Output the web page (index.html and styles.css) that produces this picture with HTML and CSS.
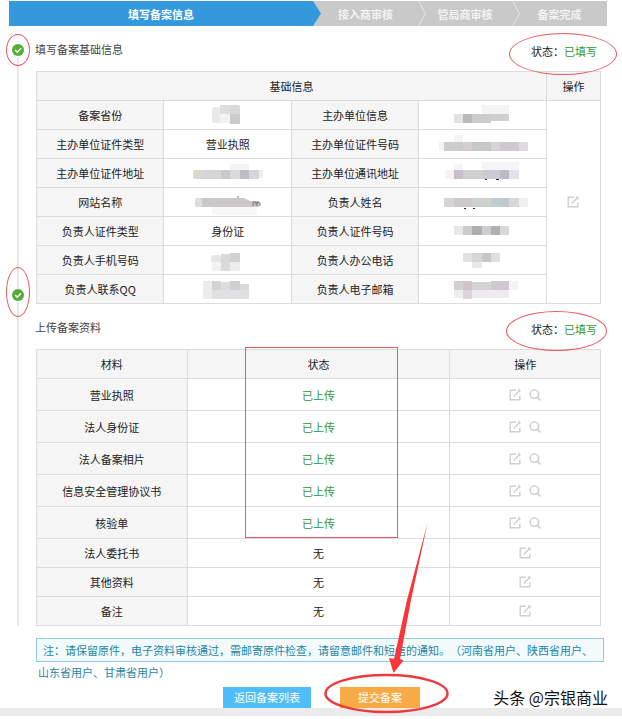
FILE: index.html
```html
<!DOCTYPE html>
<html lang="zh-CN">
<head>
    <meta charset="UTF-8">
    <meta name="viewport" content="width=device-width, initial-scale=1.0">
    <title>填写备案信息</title>
    <link rel="stylesheet" href="styles.css">
</head>
<body>
    <!-- Shared icons -->
    <svg class="icon-defs" width="0" height="0" aria-hidden="true">
        <symbol id="icon-edit" viewBox="0 0 12 12">
            <path d="M7 1.2H1.2v9.6h9.6V6.5M4.8 7.4l5.6-5.8M9 1.2h1.8v2" fill="none" stroke="currentColor" stroke-width="1.4"/>
        </symbol>
        <symbol id="icon-search" viewBox="0 0 12 12">
            <circle cx="5.4" cy="5.2" r="4.2" fill="none" stroke="currentColor" stroke-width="1.6"/>
            <path d="M8.4 8.4l3 3" stroke="currentColor" stroke-width="1.8"/>
        </symbol>
        <symbol id="icon-check" viewBox="0 0 12 12">
            <circle cx="6" cy="6" r="6" fill="#55ad35"/>
            <path d="M3.1 6l2.2 2.2 3.8-3.9" fill="none" stroke="#fff" stroke-width="1.6"/>
        </symbol>
        <symbol id="icon-chevron" viewBox="0 0 8 25">
            <path d="M.5 0l7 12.5-7 12.5" fill="none" stroke="#e6e6e6"/>
        </symbol>
    </svg>

    <ol class="steps">
        <li class="step active">填写备案信息</li>
        <li class="step"><span>接入商审核</span><svg class="chevron"><use href="#icon-chevron"/></svg></li>
        <li class="step"><span>管局商审核</span><svg class="chevron"><use href="#icon-chevron"/></svg></li>
        <li class="step"><span>备案完成</span></li>
    </ol>

    <main class="timeline">
        <section class="basic">
            <div class="marker marker-first"><svg><use href="#icon-check"/></svg></div>
            <div class="section-head">
                <h2>填写备案基础信息</h2>
                <p class="status status-wide">状态：<span class="done">已填写</span></p>
            </div>
            <table class="info">
                <colgroup>
                    <col class="w-info"><col class="w-info"><col class="w-info"><col class="w-info"><col class="w-action">
                </colgroup>
                <thead>
                    <tr><th colspan="4">基础信息</th><th>操作</th></tr>
                </thead>
                <tbody>
                    <tr>
                        <th>备案省份</th>
                        <td><svg class="mosaic" viewBox="0 0 96 28">
                            <rect x="32" y="6" width="9" height="16" rx="3" fill="#e9e9e9"/><rect x="40" y="4" width="11" height="9" fill="#dedede"/><rect x="40" y="13" width="10" height="9" fill="#f2f2f2"/><rect x="50" y="4" width="10" height="10" rx="2" fill="#d8d8da"/><rect x="50" y="13" width="10" height="10" fill="#cbcbce"/>
                        </svg></td>
                        <th>主办单位信息</th>
                        <td><svg class="mosaic" viewBox="0 0 96 28">
                            <rect x="47" y="4" width="27" height="9" fill="#f4f4f4"/><rect x="19" y="13" width="9" height="9" fill="#e3e3e3"/><rect x="28" y="13" width="9" height="9" fill="#babab9"/><rect x="37" y="13" width="19" height="9" fill="#cccccc"/><rect x="56" y="13" width="18" height="7" fill="#cdd0cf"/>
                        </svg></td>
                        <td class="ops" rowspan="7"><button class="icon-btn" type="button" aria-label="编辑"><svg><use href="#icon-edit"/></svg></button></td>
                    </tr>
                    <tr>
                        <th>主办单位证件类型</th>
                        <td>营业执照</td>
                        <th>主办单位证件号码</th>
                        <td><svg class="mosaic" viewBox="0 0 96 28">
                            <rect x="4" y="12" width="6" height="8" fill="#f3f3f3"/><rect x="19" y="5" width="9" height="7" fill="#f4f4f4"/><rect x="9" y="12" width="19" height="9" fill="#cccccc"/><rect x="28" y="12" width="9" height="9" fill="#d5cccc"/><rect x="37" y="12" width="19" height="9" fill="#c5c8c7"/><rect x="56" y="12" width="9" height="9" fill="#d4d4d7"/><rect x="65" y="12" width="19" height="9" fill="#cdc9ce"/><rect x="84" y="12" width="9" height="9" fill="#dfdae1"/>
                        </svg></td>
                    </tr>
                    <tr>
                        <th>主办单位证件地址</th>
                        <td><svg class="mosaic" viewBox="0 0 96 28">
                            <rect x="50" y="5" width="19" height="6" fill="#f4f4f4"/><rect x="13" y="11" width="10" height="9" rx="2" fill="#dad7d1"/><rect x="22" y="11" width="19" height="9" fill="#d6d4d7"/><rect x="41" y="11" width="9" height="9" fill="#c9c9c9"/><rect x="50" y="11" width="10" height="9" fill="#dad9dd"/><rect x="60" y="11" width="9" height="9" fill="#c0bec5"/><rect x="69" y="11" width="10" height="9" fill="#d6d6d8"/><rect x="79" y="11" width="4" height="8" fill="#eeeeee"/>
                        </svg></td>
                        <th>主办单位通讯地址</th>
                        <td><svg class="mosaic" viewBox="0 0 96 28">
                            <rect x="10" y="11" width="9" height="9" fill="#f6f3f1"/><rect x="19" y="5" width="9" height="6" fill="#f5f5f5"/><rect x="47" y="3" width="37" height="8" fill="#f5f5f8"/><rect x="19" y="11" width="9" height="9" fill="#c8c0c8"/><rect x="28" y="11" width="19" height="9" fill="#d0d0cf"/><rect x="47" y="11" width="18" height="9" fill="#cdc9d5"/><rect x="65" y="11" width="9" height="9" fill="#bdb9c8"/><rect x="74" y="11" width="10" height="9" fill="#e0e4e8"/><path d="M50 20.500h2M61 20.500h3" stroke="#222"/>
                        </svg></td>
                    </tr>
                    <tr>
                        <th>网站名称</th>
                        <td><svg class="mosaic" viewBox="0 0 96 28">
                            <rect x="32" y="19" width="45" height="8" fill="#f7f7f7"/><rect x="15" y="10" width="9" height="9" rx="2" fill="#dedcdc"/><path d="M22 10h42l6 3h9v6H22z" fill="#cbc8ca"/><path d="M58 10V8M73 18v-4h3v3M77 18v-4l3 1v3" fill="none" stroke="#777"/>
                        </svg></td>
                        <th>负责人姓名</th>
                        <td><svg class="mosaic" viewBox="0 0 96 28">
                            <rect x="9" y="10" width="10" height="9" fill="#d8d3d6"/><rect x="19" y="10" width="18" height="9" fill="#cdc9cb"/><rect x="37" y="10" width="19" height="9" fill="#cfd2cc"/><rect x="56" y="10" width="9" height="9" fill="#c1cbd3"/><rect x="65" y="10" width="9" height="9" fill="#becacb"/><rect x="74" y="10" width="10" height="9" fill="#d7d7d9"/><rect x="84" y="10" width="9" height="9" fill="#f0f0f0"/><path d="M29 20.500h2M38 20.500h2" stroke="#222"/>
                        </svg></td>
                    </tr>
                    <tr>
                        <th>负责人证件类型</th>
                        <td>身份证</td>
                        <th>负责人证件号码</th>
                        <td><svg class="mosaic" viewBox="0 0 96 28">
                            <rect x="19" y="9" width="9" height="9" fill="#e7e7e7"/><rect x="28" y="9" width="9" height="9" fill="#cccccd"/><rect x="37" y="9" width="10" height="9" fill="#aeadb0"/><rect x="47" y="9" width="9" height="9" fill="#cdcdcf"/><rect x="56" y="9" width="9" height="9" fill="#afafb3"/><rect x="65" y="9" width="9" height="9" fill="#d9d9d9"/>
                        </svg></td>
                    </tr>
                    <tr>
                        <th>负责人手机号码</th>
                        <td><svg class="mosaic" viewBox="0 0 96 28">
                            <rect x="31" y="9" width="10" height="8" rx="3" fill="#e6e6e6"/><rect x="41" y="8" width="9" height="9" fill="#d8dada"/><rect x="50" y="7" width="10" height="9" fill="#d1d2d3"/><rect x="32" y="16" width="9" height="9" fill="#f3f3f3"/><rect x="41" y="16" width="9" height="9" fill="#dbdbdb"/><rect x="50" y="16" width="10" height="9" fill="#ededed"/>
                        </svg></td>
                        <th>负责人办公电话</th>
                        <td><svg class="mosaic" viewBox="0 0 96 28">
                            <rect x="28" y="7" width="9" height="9" fill="#e4dfe1"/><rect x="37" y="7" width="10" height="9" fill="#d7d7d5"/><rect x="47" y="7" width="9" height="9" fill="#c4c9c9"/><rect x="56" y="7" width="9" height="9" fill="#e0dfe1"/><rect x="37" y="16" width="10" height="6" fill="#e7e9e4"/>
                        </svg></td>
                    </tr>
                    <tr>
                        <th>负责人联系QQ</th>
                        <td><svg class="mosaic" viewBox="0 0 96 28">
                            <rect x="23" y="6" width="10" height="18" fill="#ececec"/><rect x="32" y="6" width="9" height="9" fill="#d3d3d5"/><rect x="41" y="7" width="9" height="9" fill="#dddddd"/><rect x="50" y="6" width="10" height="10" fill="#d0d0d2"/><rect x="60" y="9" width="9" height="7" fill="#d9d9da"/><rect x="32" y="15" width="37" height="9" fill="#e0e0e2"/>
                        </svg></td>
                        <th>负责人电子邮箱</th>
                        <td><svg class="mosaic" viewBox="0 0 96 28">
                            <rect x="19" y="6" width="9" height="9" fill="#d4cfd1"/><rect x="28" y="6" width="9" height="9" fill="#cfc4c9"/><rect x="37" y="7" width="19" height="8" fill="#d3d3d3"/><rect x="56" y="6" width="18" height="9" fill="#cdc9cf"/><rect x="74" y="6" width="9" height="9" fill="#f5f2f5"/><rect x="19" y="15" width="9" height="8" fill="#eeeeee"/><rect x="28" y="15" width="9" height="9" fill="#ddd4d9"/><rect x="37" y="15" width="37" height="8" fill="#eeecef"/>
                        </svg></td>
                    </tr>
                </tbody>
            </table>
        </section>

        <section class="upload">
            <div class="marker marker-second"><svg><use href="#icon-check"/></svg></div>
            <div class="section-head">
                <h2>上传备案资料</h2>
                <p class="status">状态：<span class="done">已填写</span></p>
            </div>
            <div class="materials-wrap">
                <table class="materials">
                    <colgroup>
                        <col class="w-name"><col class="w-state"><col class="w-name">
                    </colgroup>
                    <thead>
                        <tr><th>材料</th><th>状态</th><th>操作</th></tr>
                    </thead>
                    <tbody>
                        <tr class="uploaded">
                            <th>营业执照</th>
                            <td class="done">已上传</td>
                            <td class="ops"><button class="icon-btn" type="button" aria-label="编辑"><svg><use href="#icon-edit"/></svg></button><button class="icon-btn" type="button" aria-label="查看"><svg><use href="#icon-search"/></svg></button></td>
                        </tr>
                        <tr class="uploaded">
                            <th>法人身份证</th>
                            <td class="done">已上传</td>
                            <td class="ops"><button class="icon-btn" type="button" aria-label="编辑"><svg><use href="#icon-edit"/></svg></button><button class="icon-btn" type="button" aria-label="查看"><svg><use href="#icon-search"/></svg></button></td>
                        </tr>
                        <tr class="uploaded">
                            <th>法人备案相片</th>
                            <td class="done">已上传</td>
                            <td class="ops"><button class="icon-btn" type="button" aria-label="编辑"><svg><use href="#icon-edit"/></svg></button><button class="icon-btn" type="button" aria-label="查看"><svg><use href="#icon-search"/></svg></button></td>
                        </tr>
                        <tr class="uploaded">
                            <th>信息安全管理协议书</th>
                            <td class="done">已上传</td>
                            <td class="ops"><button class="icon-btn" type="button" aria-label="编辑"><svg><use href="#icon-edit"/></svg></button><button class="icon-btn" type="button" aria-label="查看"><svg><use href="#icon-search"/></svg></button></td>
                        </tr>
                        <tr class="uploaded">
                            <th>核验单</th>
                            <td class="done">已上传</td>
                            <td class="ops"><button class="icon-btn" type="button" aria-label="编辑"><svg><use href="#icon-edit"/></svg></button><button class="icon-btn" type="button" aria-label="查看"><svg><use href="#icon-search"/></svg></button></td>
                        </tr>
                        <tr>
                            <th>法人委托书</th>
                            <td>无</td>
                            <td class="ops"><button class="icon-btn" type="button" aria-label="编辑"><svg><use href="#icon-edit"/></svg></button></td>
                        </tr>
                        <tr>
                            <th>其他资料</th>
                            <td>无</td>
                            <td class="ops"><button class="icon-btn" type="button" aria-label="编辑"><svg><use href="#icon-edit"/></svg></button></td>
                        </tr>
                        <tr>
                            <th>备注</th>
                            <td>无</td>
                            <td class="ops"><button class="icon-btn" type="button" aria-label="编辑"><svg><use href="#icon-edit"/></svg></button></td>
                        </tr>
                    </tbody>
                </table>
                <div class="state-box"></div>
            </div>
        </section>
    </main>

    <p class="note">注：请保留原件，电子资料审核通过，需邮寄原件检查，请留意邮件和短信的通知。（河南省用户、陕西省用户、山东省用户、甘肃省用户）</p>

    <div class="actions">
        <button class="btn btn-back" type="button">返回备案列表</button>
        <div class="submit-wrap">
            <button class="btn btn-submit" type="button">提交备案</button>
            <!-- Arrow and circle pointing at the submit button -->
            <svg class="pointer" viewBox="0 0 140 196" aria-hidden="true">
                <ellipse cx="66.500" cy="173.500" rx="61" ry="18.500" fill="none" stroke="#ee3a3d" stroke-width="2.500"/>
                <path d="M107.500 3L91 80 80 139l3.500 1.500L73.500 153 69 138l5 1L87 80z" fill="#fb3538"/>
            </svg>
        </div>
        <span class="watermark">头条 @宗银商业</span>
    </div>
    <footer class="bottom-bar"></footer>
</body>
</html>
```

FILE: styles.css
```css
* {
    box-sizing: border-box;
}
body {
    margin: 0;
    padding-top: 1px;
    background-color: #fff;
    color: #222;
    font-family: "Noto Sans CJK SC", sans-serif;
    font-size: 11px;
    line-height: 16px;
    text-spacing-trim: space-all;
}
h2, p {
    margin: 0;
    font-size: 11px;
    font-weight: normal;
}
button {
    border: none;
    padding: 0;
    font-family: inherit;
    cursor: pointer;
}
.icon-defs {
    position: absolute;
}

/* Progress steps */
.steps {
    display: grid;
    grid-template-columns: 312fr 105fr 94fr 87fr;
    height: 25px;
    margin: 0 15px 0 9px;
    padding: 0;
    list-style: none;
    background-color: #c9c9c9;
    color: #f2f2f2;
    font-weight: bold;
}
.step {
    display: flex;
    align-items: center;
    justify-content: center;
}
.step span {
    flex: 1;
    padding-right: 8px;
    text-align: center;
}
.step.active {
    padding-right: 8px;
    background-color: #3498dd;
    color: #fff;
    clip-path: polygon(0 0, calc(100% - 8px) 0, 100% 50%, calc(100% - 8px) 100%, 0 100%);
}
.chevron {
    width: 8px;
    height: 25px;
}

/* Vertical line with check marks */
.timeline {
    margin: 15px 21px 0 17px;
    padding-left: 19px;
    background: linear-gradient(#e8e8e8, #e8e8e8) 0 16px / 2px 100% no-repeat;
}
.basic, .upload {
    position: relative;
}
.upload {
    margin-top: 15px;
}
.marker {
    position: absolute;
    left: -30px;
    width: 24px;
    border: 1px solid #ea5a60;
    border-radius: 50%;
    display: flex;
    align-items: center;
    justify-content: center;
}
.marker svg {
    width: 12px;
    height: 12px;
}
.marker-first {
    top: -7px;
    height: 32px;
}
.marker-second {
    top: -52px;
    height: 50px;
    padding-top: 6px;
}
.section-head {
    display: flex;
    justify-content: space-between;
    height: 30px;
    padding-right: 4px;
}
.section-head h2 {
    margin-left: -1px;
    color: #444;
}
.status {
    position: relative;
    z-index: 1;
    align-self: flex-start;
    margin-top: 2px;
}
.status::after {
    content: "";
    position: absolute;
    top: -10px;
    left: -25px;
    right: -10px;
    height: 38px;
    border: 1px solid #ea5a60;
    border-radius: 50%;
}
.status-wide::after {
    left: -22px;
    right: -20px;
    height: 40px;
}
.done {
    color: #2f9a32;
}

/* Tables */
table {
    width: 100%;
    border-collapse: collapse;
    table-layout: fixed;
}
th, td {
    height: 29px;
    padding: 0;
    border: 1px solid #dcdcdc;
    text-align: center;
    font-weight: normal;
}
th {
    background-color: #f5f5f5;
}
.w-info {
    width: 22.6%;
}
.w-action {
    width: 9.6%;
}
.w-name {
    width: 26.7%;
}
.w-state {
    width: 46.6%;
}
.uploaded th, .uploaded td {
    height: 32px;
}
.mosaic {
    display: block;
    width: 96px;
    height: 28px;
    margin: 0 auto;
}
.ops {
    line-height: 0;
}
.icon-btn {
    width: 12px;
    height: 12px;
    background: none;
    color: #cfcfcf;
    vertical-align: top;
}
.icon-btn + .icon-btn {
    margin-left: 8px;
}
.icon-btn svg {
    display: block;
    width: 12px;
    height: 12px;
}
.materials-wrap {
    position: relative;
}
.state-box {
    position: absolute;
    z-index: 1;
    top: -2px;
    left: 37%;
    width: 27%;
    height: 191px;
    border: 1px solid #ea5a60;
}

/* Note */
.note {
    height: 24px;
    margin: 12px 18px 0 36px;
    padding: 0 4px 0 1px;
    border: 1px solid #8fcbe6;
    background-color: #f3fafc;
    color: #2585a5;
    line-height: 22px;
    text-indent: 5px;
}

/* Buttons */
.actions {
    display: flex;
    align-items: flex-start;
    margin-top: 25px;
    padding: 0 14px 0 223px;
}
.btn {
    display: block;
    height: 21px;
    color: #fff;
    font-size: 11px;
    line-height: 21px;
}
.btn-back {
    width: 88px;
    margin-right: 29px;
    background-color: #4fbdf8;
}
.btn-submit {
    width: 80px;
    background-color: #f8aa45;
}
.submit-wrap {
    position: relative;
}
.pointer {
    position: absolute;
    left: -20px;
    bottom: -8px;
    width: 140px;
    height: 196px;
    pointer-events: none;
}
.watermark {
    margin-left: auto;
    color: #111;
    font-size: 16px;
    line-height: 20px;
    white-space: nowrap;
    text-shadow: -1px -1px 0 #fff, 1px 1px 0 #fff;
}
.bottom-bar {
    height: 8px;
    background-color: #ebebeb;
}
```
